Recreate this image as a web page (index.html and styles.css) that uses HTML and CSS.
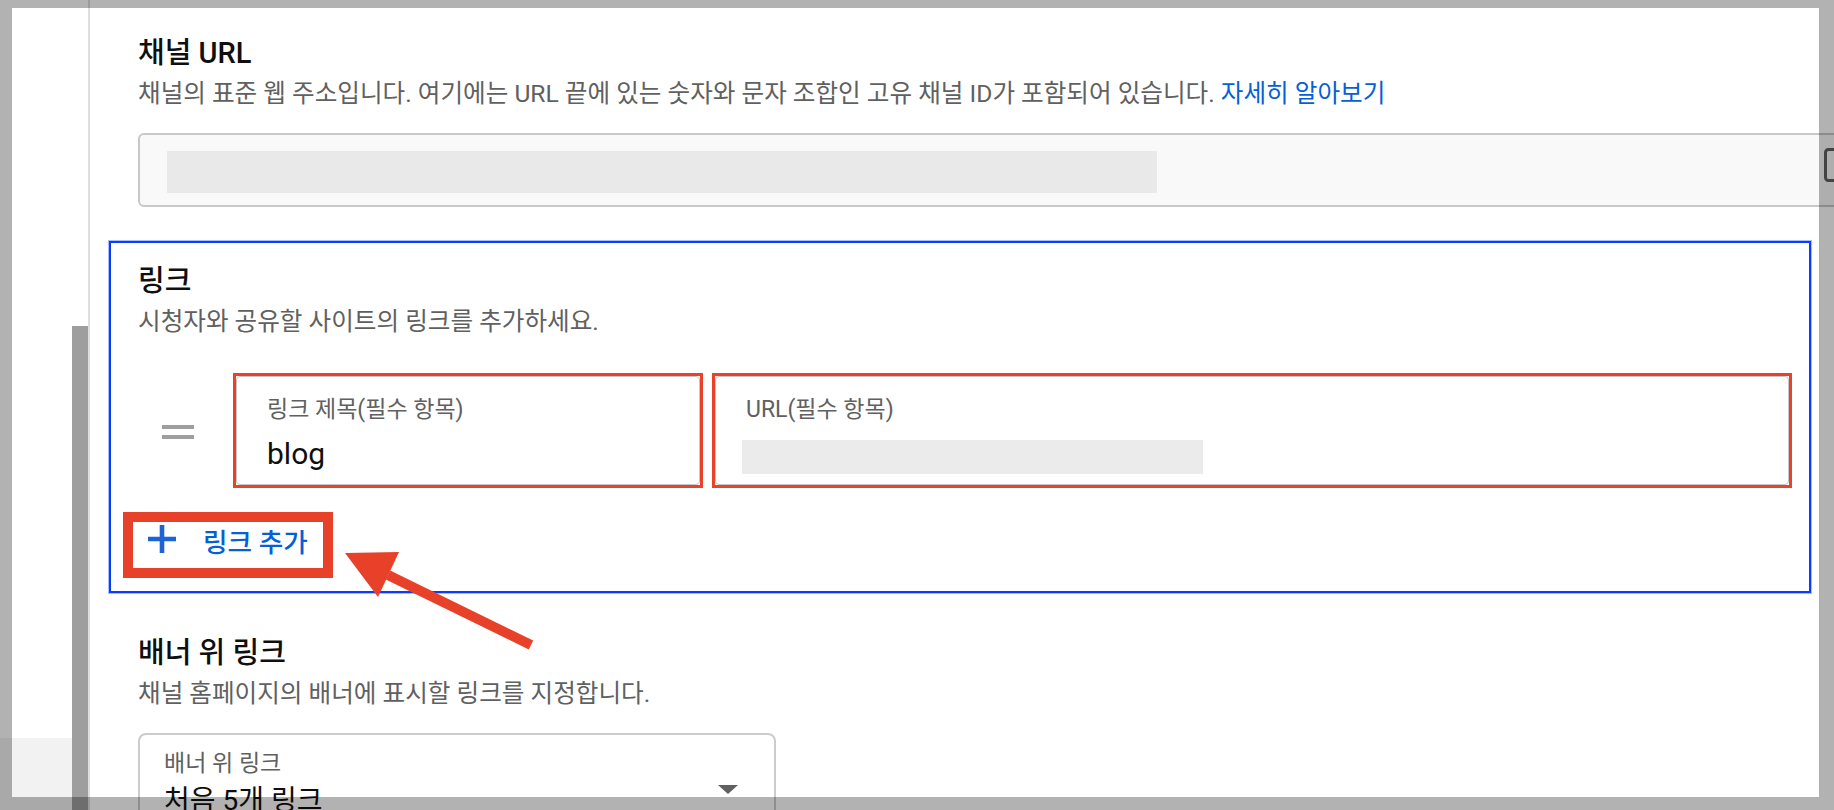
FILE: index.html
```html
<!DOCTYPE html>
<html lang="ko">
<head>
<meta charset="utf-8">
<title>채널 설정</title>
<link rel="stylesheet" href="styles.css">
</head>
<body>
<div class="page">
  <aside class="sidebar">
    <div class="nav">
      <div class="nav-fill"></div>
      <div class="nav-foot"></div>
    </div>
    <div class="scroll"><div class="thumb"></div></div>
  </aside>

  <main class="main">
    <section class="section">
      <h2 class="title">채널 URL</h2>
      <p class="desc">채널의 표준 웹 주소입니다. 여기에는 URL 끝에 있는 숫자와 문자 조합인 고유 채널 ID가 포함되어 있습니다. <a class="link">자세히 알아보기</a></p>
      <div class="url-box">
        <div class="redact"></div>
        <svg class="copy" width="24" height="34" viewBox="0 0 24 34"><rect x="1.5" y="1.5" width="21" height="31" rx="3" fill="none" stroke="#606060" stroke-width="3"/></svg>
      </div>
    </section>

    <section class="links">
      <h2 class="title">링크</h2>
      <p class="desc desc-links">시청자와 공유할 사이트의 링크를 추가하세요.</p>
      <div class="link-row">
        <div class="handle"><span class="bar"></span><span class="bar"></span></div>
        <div class="mark mark-title">
          <div class="field">
            <div class="label">링크 제목(필수 항목)</div>
            <div class="value">blog</div>
          </div>
        </div>
        <div class="mark mark-url">
          <div class="field">
            <div class="label">URL(필수 항목)</div>
            <div class="redact redact-small"></div>
          </div>
        </div>
      </div>
      <div class="add-mark">
        <div class="add">
          <svg class="plus" width="28" height="28" viewBox="0 0 28 28"><path d="M14 0V28M0 14H28" stroke="#1f62d6" stroke-width="4.6" fill="none"/></svg>
          <span class="add-text">링크 추가</span>
        </div>
      </div>
    </section>

    <section class="section banner">
      <h2 class="title">배너 위 링크</h2>
      <p class="desc">채널 홈페이지의 배너에 표시할 링크를 지정합니다.</p>
      <div class="select">
        <div class="select-text">
          <div class="label">배너 위 링크</div>
          <div class="value value-select">처음 5개 링크</div>
        </div>
        <span class="caret"></span>
      </div>
    </section>
  </main>

  <svg class="arrow" width="1834" height="810" viewBox="0 0 1834 810">
    <polygon points="345,553 399,552 378,597" fill="#e8412a"/>
    <polygon points="385.8,579.5 390.2,570.5 533.2,640.5 528.8,649.5" fill="#e8412a"/>
  </svg>

  <div class="dim dim-top"></div>
  <div class="dim dim-bottom"></div>
  <div class="dim dim-left"></div>
  <div class="dim dim-right"></div>
</div>
</body>
</html>
```

FILE: styles.css
```css
* { box-sizing: border-box; }

html, body {
  margin: 0;
  padding: 0;
  background: #ffffff;
}

body {
  font-family: Roboto, "Noto Sans CJK KR", "Noto Sans", sans-serif;
  color: #0f0f0f;
}

.page {
  position: relative;
  width: 1834px;
  height: 810px;
  overflow: hidden;
  display: flex;
  background: #ffffff;
}

/* left rail */
.sidebar {
  flex: 0 0 90px;
  display: flex;
  border-right: 2px solid #dedede;
  height: 810px;
}

.nav {
  width: 72px;
  display: flex;
  flex-direction: column;
}

.nav-fill { flex: 1; background: #ffffff; }
.nav-foot { height: 72px; background: #f2f2f2; }

.scroll {
  width: 16px;
  padding-top: 326px;
  display: flex;
  flex-direction: column;
}

.thumb { flex: 1; background: #9e9e9e; }

/* main column */
.main {
  flex: 1;
  min-width: 0;
  padding: 35px 0 0 48px;
}

.section { margin: 0; }

.title {
  margin: 0;
  font-size: 29px;
  line-height: 36px;
  font-weight: 500;
  color: #0f0f0f;
}

.desc {
  margin: 8px 0 0;
  font-size: 24.6px;
  line-height: 30px;
  font-weight: 400;
  color: #606060;
  white-space: nowrap;
}

.link { color: #065fd4; text-decoration: none; }

.url-box {
  margin-top: 24px;
  width: 1722px;
  height: 74px;
  border: 2px solid #c8c8c8;
  border-radius: 6px;
  background: #f9f9f9;
  display: flex;
  align-items: flex-start;
  padding: 14px 10px 0 27px;
}

.redact {
  width: 990px;
  height: 42px;
  background: #e9e9e9;
  margin-top: 2px;
}

.copy {
  margin-left: auto;
  margin-top: -1px;
  display: block;
}

/* links block with annotation outline */
.links {
  margin: 34px 0 0 -29px;
  width: 1702px;
  height: 352px;
  border: 2px solid #0a3cff;
  box-shadow: 0 0 0 1px rgba(60, 110, 255, 0.45);
  padding: 20px 0 0 27px;
}

.desc-links { margin-top: 8px; }

.link-row {
  margin-top: 36px;
  height: 115px;
  display: flex;
  align-items: center;
}

.handle {
  width: 95px;
  padding-left: 24px;
  display: flex;
  flex-direction: column;
  gap: 6px;
  margin-top: 2px;
}

.bar {
  display: block;
  width: 32px;
  height: 4px;
  background: #9e9e9e;
}

.mark {
  height: 115px;
  border: 3px solid #e8432a;
}

.mark-title { width: 470px; }
.mark-url { width: 1080px; margin-left: 9px; }

.field {
  height: 100%;
  border: 1px solid #c6c6c6;
  border-radius: 4px;
  padding: 19px 30px 0;
  background: #ffffff;
}

.label {
  font-size: 23px;
  line-height: 28px;
  color: #606060;
  white-space: nowrap;
}

.value {
  margin-top: 12px;
  font-size: 30px;
  line-height: 36px;
  color: #0f0f0f;
  white-space: nowrap;
}

.redact-small {
  width: 461px;
  height: 34px;
  margin: 16px 0 0 -4px;
  background: #ebebeb;
}

.add-mark {
  margin: 24px 0 0 -15px;
  width: 210px;
  height: 66px;
  border: 10px solid #e8412a;
}

.add {
  display: flex;
  align-items: flex-start;
  padding: 3px 0 0 15px;
  gap: 27px;
}

.plus { display: block; }

.add-text {
  margin-top: 2px;
  font-size: 26.7px;
  line-height: 32px;
  font-weight: 500;
  color: #065fd4;
  white-space: nowrap;
}

/* banner links */
.banner { margin-top: 42px; }

.select {
  margin-top: 24px;
  width: 638px;
  height: 110px;
  border: 2px solid #cccccc;
  border-radius: 8px;
  padding: 15px 36px 0 24px;
  display: flex;
  align-items: flex-start;
}

.select-text { flex: 1; }

.value-select {
  margin-top: 5px;
  font-size: 28px;
}

.caret {
  margin-top: 35px;
  width: 0;
  height: 0;
  border-left: 10px solid transparent;
  border-right: 10px solid transparent;
  border-top: 9px solid #606060;
}

/* annotation arrow */
.arrow {
  position: absolute;
  left: 0;
  top: 0;
  pointer-events: none;
}

/* dimmed frame around the capture */
.dim {
  position: absolute;
  background: rgba(0, 0, 0, 0.3);
}

.dim-top { left: 0; top: 0; width: 1834px; height: 8px; }
.dim-bottom { left: 0; top: 797px; width: 1834px; height: 13px; }
.dim-left { left: 0; top: 8px; width: 12px; height: 789px; }
.dim-right { left: 1819px; top: 8px; width: 15px; height: 789px; }
```
